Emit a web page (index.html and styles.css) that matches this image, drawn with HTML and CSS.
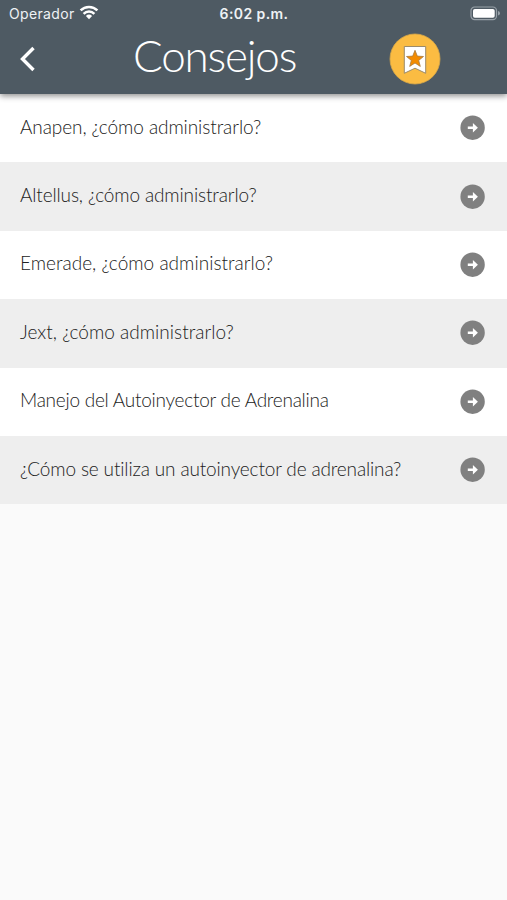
FILE: index.html
```html
<!DOCTYPE html>
<html lang="es">
<head>
<meta charset="utf-8">
<title>Consejos</title>
<link rel="stylesheet" href="styles.css">
</head>
<body>
<svg class="symbols" width="0" height="0" aria-hidden="true">
  <symbol id="arrow" viewBox="0 0 26 26">
    <circle cx="12.6" cy="12.7" r="12.2" fill="#808080"/>
    <path d="M7.8 11.4h5.1V7.9l5 4.8-5 4.8V14H7.8z" fill="#fff"/>
  </symbol>
</svg>
<header class="header">
  <div class="status">
    <div class="carrier">
      <span>Operador</span>
      <svg class="wifi" width="20" height="15" viewBox="0 0 20 15" fill="none" stroke="#fff" stroke-width="2.5">
        <path d="M1.6 5.4a12 12 0 0 1 16.8 0"/>
        <path d="M4.6 8.8a7.7 7.7 0 0 1 10.8 0"/>
        <path d="M10 14.2 6.9 11a4.5 4.5 0 0 1 6.2 0z" fill="#fff" stroke="none"/>
      </svg>
    </div>
    <time class="time">6:02 p.m.</time>
    <svg class="battery" width="31" height="15" viewBox="0 0 31 15">
      <rect x="1" y="1" width="25.5" height="12.6" rx="3.6" fill="none" stroke="#98a1a8" stroke-width="1.2"/>
      <rect x="3" y="3" width="21.7" height="8.8" rx="1.8" fill="#fff"/>
      <path d="M28 5v4.6q2-.6 2-2.3T28 5z" fill="#98a1a8"/>
    </svg>
  </div>
  <div class="bar">
    <svg class="back" width="18" height="26" viewBox="0 0 18 26">
      <path d="M14.5 2 3.5 13l11 11" fill="none" stroke="#fff" stroke-width="3.4"/>
    </svg>
    <h1 class="title">Consejos</h1>
    <svg class="bookmark" width="52" height="52" viewBox="0 0 52 52">
      <circle cx="26" cy="26" r="25" fill="#fbbc42" stroke="#d9a848" stroke-width=".8"/>
      <path d="M15.3 13.5h21.4v26.8L26 35.2l-10.7 5.1z" fill="#fff" stroke="#9b8b6b"/>
      <path d="m26 17.3 2.3 5.8 6.2.4-4.8 3.9 1.6 6-5.3-3.4-5.3 3.4 1.6-6-4.8-3.9 6.2-.4z" fill="#f38b00" stroke="#a87b40" stroke-width=".8"/>
    </svg>
  </div>
</header>
<main class="list">
  <a class="row"><span class="label anapen">Anapen, ¿cómo administrarlo?</span><svg class="go"><use href="#arrow"/></svg></a>
  <a class="row"><span class="label altellus">Altellus, ¿cómo administrarlo?</span><svg class="go"><use href="#arrow"/></svg></a>
  <a class="row"><span class="label emerade">Emerade, ¿cómo administrarlo?</span><svg class="go"><use href="#arrow"/></svg></a>
  <a class="row"><span class="label jext">Jext, ¿cómo administrarlo?</span><svg class="go"><use href="#arrow"/></svg></a>
  <a class="row"><span class="label manejo">Manejo del Autoinyector de Adrenalina</span><svg class="go"><use href="#arrow"/></svg></a>
  <a class="row"><span class="label utiliza">¿Cómo se utiliza un autoinyector de adrenalina?</span><svg class="go"><use href="#arrow"/></svg></a>
</main>
</body>
</html>
```
FILE: styles.css
```css
* { box-sizing: border-box; }
body {
  margin: 0;
  height: 900px;
  overflow: hidden;
  background: #fafafa;
  font-family: Lato, "Open Sans", sans-serif;
}
.symbols { display: none; }
.header {
  position: relative;
  height: 94px;
  background: #4e5a63;
  box-shadow: 0 2px 6px rgba(0, 0, 0, .45);
}
.status {
  display: grid;
  grid-template-columns: 1fr auto 1fr;
  align-items: center;
  height: 27px;
  padding: 0 6px 0 9px;
  font-family: Inter, sans-serif;
  font-size: 14px;
  color: #eef2f5;
}
.carrier { display: flex; align-items: center; gap: 4px; letter-spacing: .35px; }
.wifi { margin-top: -2px; }
.time { margin-left: -2px; font-weight: 600; letter-spacing: .4px; }
.battery { justify-self: end; }
.bar {
  display: grid;
  grid-template-columns: 133px 256px 52px;
  align-items: center;
  height: 64px;
}
.back { margin-left: 19px; }
.title {
  margin: 0;
  padding-bottom: 7px;
  font-size: 44px;
  line-height: 57px;
  font-weight: 300;
  letter-spacing: -1.2px;
  color: #fff;
}
.row {
  display: flex;
  align-items: center;
  justify-content: space-between;
  height: 68.4px;
  padding: 0 21px 0 20px;
  background: #fff;
}
.row:nth-child(even) { background: #eee; }
.label {
  padding-bottom: 3px;
  font-size: 19px;
  line-height: 28px;
  font-weight: 300;
  white-space: nowrap;
  color: #222;
}
.anapen { letter-spacing: -.08px; }
.altellus { letter-spacing: -.13px; }
.emerade { letter-spacing: .02px; }
.jext { letter-spacing: .02px; }
.manejo { letter-spacing: -.25px; }
.utiliza { letter-spacing: -.15px; }
.go { flex: none; width: 26px; height: 26px; }
```
